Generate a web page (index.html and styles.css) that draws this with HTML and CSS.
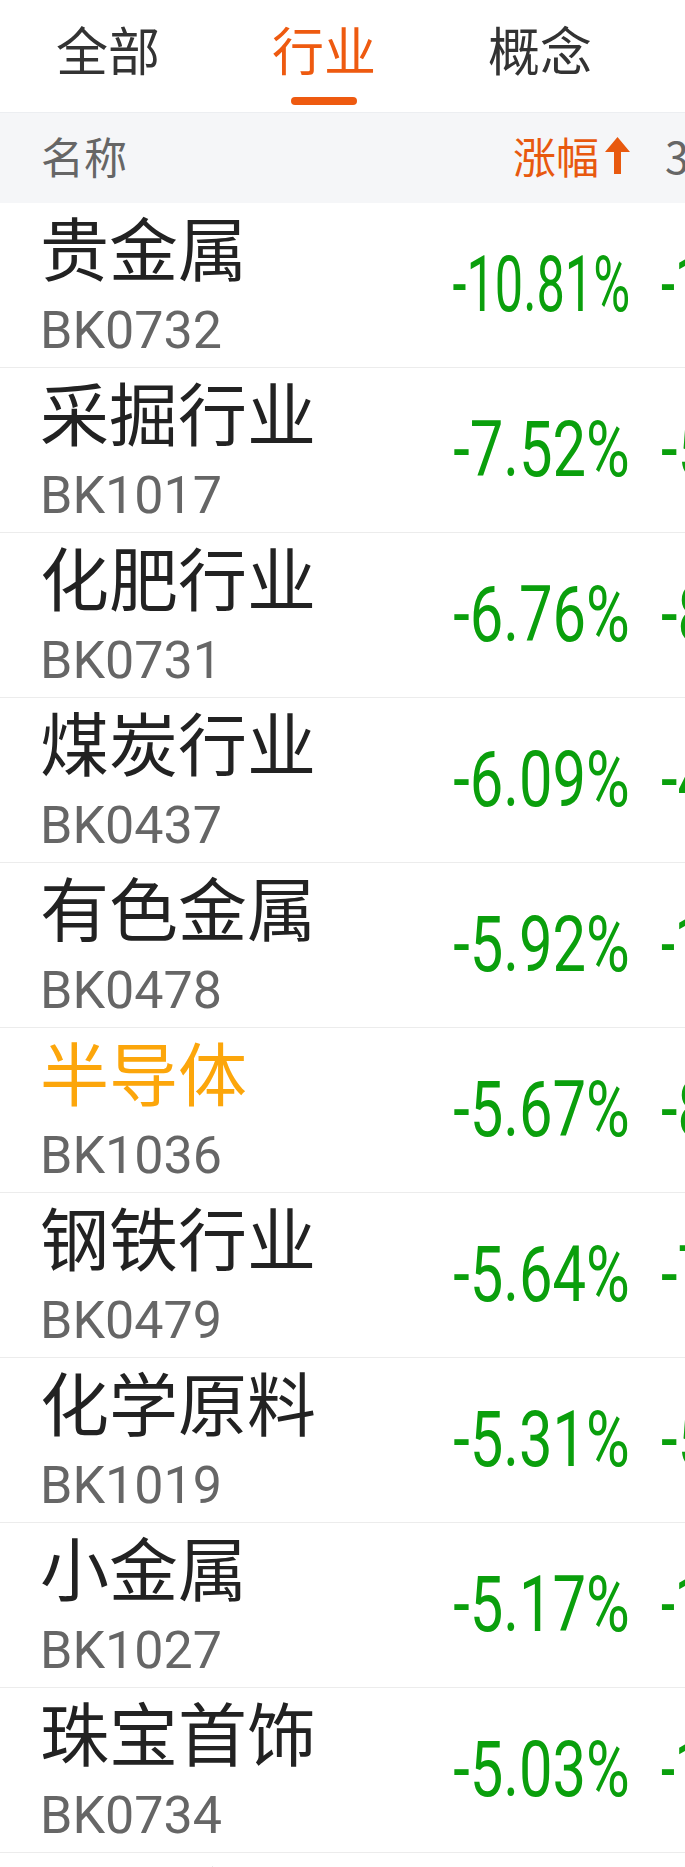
FILE: index.html
```html
<!DOCTYPE html>
<html lang="zh-CN">
<head>
<meta charset="utf-8">
<title>板块</title>
<link rel="stylesheet" href="styles.css">
</head>
<body>
<div class="page">
  <nav class="tabs">
    <div class="tab"><span class="tab-text">全部</span><span class="tab-bar"></span></div>
    <div class="tab active"><span class="tab-text">行业</span><span class="tab-bar"></span></div>
    <div class="tab"><span class="tab-text">概念</span><span class="tab-bar"></span></div>
  </nav>
  <div class="thead">
    <div class="c-name">名称</div>
    <div class="c-chg sort">涨幅<svg class="arrow" width="25" height="37" viewBox="0 0 25 37"><path d="M12.5 0 L25 15 L16 15 L16 37 L9 37 L9 15 L0 15 Z" fill="#e8590f"/></svg></div>
    <div class="c-more">3日涨幅</div>
  </div>
  <div class="list">
    <div class="row"><div class="c-name"><div class="nm">贵金属</div><div class="code">BK0732</div></div><div class="c-chg"><span class="pct fit">-10.81%</span></div><div class="c-more"><span class="pct fit">-12.46%</span></div></div>
    <div class="row"><div class="c-name"><div class="nm">采掘行业</div><div class="code">BK1017</div></div><div class="c-chg"><span class="pct">-7.52%</span></div><div class="c-more"><span class="pct">-5.88%</span></div></div>
    <div class="row"><div class="c-name"><div class="nm">化肥行业</div><div class="code">BK0731</div></div><div class="c-chg"><span class="pct">-6.76%</span></div><div class="c-more"><span class="pct">-8.21%</span></div></div>
    <div class="row"><div class="c-name"><div class="nm">煤炭行业</div><div class="code">BK0437</div></div><div class="c-chg"><span class="pct">-6.09%</span></div><div class="c-more"><span class="pct">-4.67%</span></div></div>
    <div class="row"><div class="c-name"><div class="nm">有色金属</div><div class="code">BK0478</div></div><div class="c-chg"><span class="pct">-5.92%</span></div><div class="c-more"><span class="pct fit">-10.35%</span></div></div>
    <div class="row"><div class="c-name"><div class="nm hl">半导体</div><div class="code">BK1036</div></div><div class="c-chg"><span class="pct">-5.67%</span></div><div class="c-more"><span class="pct">-8.94%</span></div></div>
    <div class="row"><div class="c-name"><div class="nm">钢铁行业</div><div class="code">BK0479</div></div><div class="c-chg"><span class="pct">-5.64%</span></div><div class="c-more"><span class="pct">-7.33%</span></div></div>
    <div class="row"><div class="c-name"><div class="nm">化学原料</div><div class="code">BK1019</div></div><div class="c-chg"><span class="pct">-5.31%</span></div><div class="c-more"><span class="pct">-5.46%</span></div></div>
    <div class="row"><div class="c-name"><div class="nm">小金属</div><div class="code">BK1027</div></div><div class="c-chg"><span class="pct">-5.17%</span></div><div class="c-more"><span class="pct fit">-10.72%</span></div></div>
    <div class="row"><div class="c-name"><div class="nm">珠宝首饰</div><div class="code">BK0734</div></div><div class="c-chg"><span class="pct">-5.03%</span></div><div class="c-more"><span class="pct fit">-11.38%</span></div></div>
    <div class="row"><div class="c-name"><div class="nm">能源金属</div><div class="code">BK1015</div></div><div class="c-chg"><span class="pct">-4.98%</span></div><div class="c-more"><span class="pct">-9.12%</span></div></div>
  </div>
</div>
</body>
</html>
```
FILE: styles.css
```css
html, body {
  margin: 0;
  padding: 0;
  background: #ffffff;
}
body {
  width: 685px;
  height: 1867px;
  overflow: hidden;
  font-family: "Noto Sans CJK SC", "Noto Sans", sans-serif;
}
.page {
  width: 685px;
  overflow: hidden;
}
.tabs {
  display: flex;
  height: 112px;
  border-bottom: 1px solid #eceef1;
  box-sizing: content-box;
}
.tab {
  width: 216px;
  flex: none;
  display: flex;
  flex-direction: column;
  align-items: center;
  padding-top: 17px;
  box-sizing: border-box;
}
.tab-text {
  font-size: 52px;
  line-height: 64px;
  color: #333333;
}
.tab-bar {
  width: 66px;
  height: 8px;
  border-radius: 4px;
  margin-top: 16px;
  background: transparent;
}
.tab.active .tab-text {
  color: #ee5a10;
}
.tab.active .tab-bar {
  background: #ee5a10;
}

.thead, .row {
  display: grid;
  grid-template-columns: 330px 302px 300px;
  width: 685px;
  overflow: hidden;
}
.thead {
  height: 90px;
  background: #f5f6f8;
  align-items: center;
  padding-bottom: 6px;
  box-sizing: border-box;
  font-size: 43px;
  line-height: 56px;
  color: #666666;
}
.thead .c-name {
  padding-left: 41px;
}
.thead .c-chg {
  display: flex;
  justify-content: flex-end;
  align-items: center;
  color: #e8590f;
  padding-right: 2px;
}
.arrow {
  margin-left: 6px;
  display: block;
}
.thead .c-more {
  padding-left: 33px;
  white-space: nowrap;
}

.row {
  height: 165px;
  border-bottom: 1px solid #ececec;
  box-sizing: border-box;
  align-items: center;
}
.row .c-name {
  align-self: start;
  padding-top: 3px;
  padding-left: 40px;
}
.nm {
  font-size: 69px;
  line-height: 80px;
  color: #222222;
  white-space: nowrap;
}
.nm.hl {
  color: #fca60b;
}
.code {
  margin-top: 15px;
  font-family: Roboto, "Noto Sans", sans-serif;
  font-size: 52px;
  line-height: 60px;
  color: #666666;
}
.c-chg {
  text-align: right;
  padding-right: 2px;
}
.c-more {
  white-space: nowrap;
  padding-left: 29px;
}
.pct {
  display: inline-block;
  font-family: Roboto, "Noto Sans", sans-serif;
  font-size: 77px;
  line-height: 90px;
  color: #0a9f0c;
  transform: scaleX(0.775);
  transform-origin: right center;
  white-space: nowrap;
}
.pct.fit {
  transform: scaleX(0.655);
}
.c-more .pct {
  transform-origin: left center;
}
```
